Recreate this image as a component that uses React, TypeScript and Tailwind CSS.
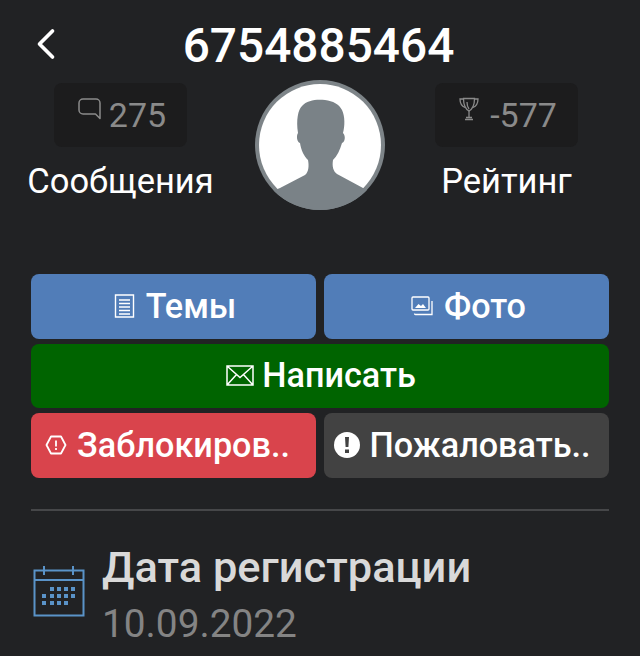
import { ChevronLeft } from "lucide-react"

const font = "font-['Roboto',sans-serif]"

function ChatIcon() {
  return (
    <svg width="23" height="22" viewBox="0 0 23 22" fill="none" stroke="#8a8a8a" strokeWidth="1.5">
      <path d="M5 1h13a4 4 0 0 1 4 4v15.500l-4.500-4.500H5a4 4 0 0 1-4-4V5a4 4 0 0 1 4-4z" strokeLinejoin="round" />
    </svg>
  )
}

function TrophyIcon() {
  return (
    <svg width="20" height="24" viewBox="0 0 20 24" fill="none" stroke="#8a8a8a" strokeWidth="1.300">
      <path d="M4.500 1.500h11c0 6-1 10-5.500 12.500C5.500 11.500 4.500 7.500 4.500 1.500z" />
      <path d="M4.500 2H1c0 4 1.500 7 5 8.500M15.500 2H19c0 4-1.500 7-5 8.500" />
      <path d="M8 5c0 3 .5 5 2 7M10 14v6M6 22.500h8M7 20.500h6" />
    </svg>
  )
}

function Avatar() {
  return (
    <div className="w-[130px] h-[130px] rounded-full bg-[#7d8488] overflow-hidden shrink-0">
      <svg width="130" height="130" viewBox="0 0 130 130" fill="#7a8287">
        <circle cx="65" cy="65" r="61" fill="white" />
        <path d="M25 108L50 95C54 92 54 85 53 80C49 76 46 70 45 63C42 62 41 56 43 53C41 40 43 30 47 26C52 20 62 19 70 20C78 21 84 24 87 30C90 36 90 46 88 53C91 56 90 62 87 63C85 70 82 76 78 80C77 86 78 91 82 94L108 108L130 118V130H0V118z" />
      </svg>
    </div>
  )
}

function Stat({ icon, value, label, boxClass, gapClass }: { icon: React.ReactNode; value: string; label: string; boxClass: string; gapClass: string }) {
  return (
    <div className="flex flex-col items-center">
      <div className={`h-[64px] rounded-lg bg-[#1c1c1d] flex items-center justify-center pl-[3px] ${gapClass} ${boxClass}`}>
        <span className="-mt-3">{icon}</span>
        <span className="text-[34px] leading-none text-[#8a8a8a]">{value}</span>
      </div>
      <div className="text-[34.500px] leading-none text-white mt-[17px] whitespace-nowrap">{label}</div>
    </div>
  )
}

function ActionButton({ color, icon, label, className = "" }: { color: string; icon: React.ReactNode; label: string; className?: string }) {
  return (
    <div className={`h-[64.500px] rounded-lg flex items-center justify-center text-white text-[34.200px] font-medium ${color} ${className}`}>
      {icon}
      <span>{label}</span>
    </div>
  )
}

export default function App() {
  return (
    <div className={`w-[640px] h-[656px] bg-[#212224] overflow-hidden ${font}`}>
      <div className="relative h-[80px] flex items-center justify-center">
        <ChevronLeft className="absolute left-[20px] top-[18px] text-white" size={52} strokeWidth={1.700} />
        <h1 className="text-[47.800px] leading-none font-medium text-white mt-[13px] -ml-[3px]">6754885464</h1>
      </div>

      <div className="flex pl-[28px]">
        <div className="flex w-[185px] justify-center pt-[3px]">
          <Stat icon={<ChatIcon />} value="275" label="Сообщения" boxClass="w-[133px]" gapClass="gap-[8px]" />
        </div>
        <div className="ml-[42px]">
          <Avatar />
        </div>
        <div className="flex w-[143px] ml-[50px] justify-center pt-[3px]">
          <Stat icon={<TrophyIcon />} value="-577" label="Рейтинг" boxClass="w-[143px]" gapClass="gap-[11px]" />
        </div>
      </div>

      <div className="mt-[64px] mx-[31px] grid grid-cols-2 gap-x-2 gap-y-[5px]">
        <ActionButton
          className="gap-[11px] pl-[3px]"
          color="bg-[#517db8]"
          label="Темы"
          icon={
            <svg width="21" height="24" viewBox="0 0 21 24" fill="none" stroke="white" strokeWidth="1.400">
              <path d="M1.500 1h18v22h-18zM5 6h11M5 9.500h11M5 13h11M5 16.500h11M5 20h11" />
            </svg>
          }
        />
        <ActionButton
          className="gap-[11px] pl-[4px]"
          color="bg-[#517db8]"
          label="Фото"
          icon={
            <svg width="22" height="20" viewBox="0 0 22 20" fill="none" stroke="white" strokeWidth="1.300">
              <rect x="1" y="1" width="17" height="13" rx="1" />
              <path d="M3.500 17.500a1 1 0 0 0 1 1H21V5" />
              <path d="M4 12l3.500-4 2.500 2 2-2 3 4z" fill="white" stroke="none" />
            </svg>
          }
        />
        <ActionButton
          className="col-span-2 gap-[8px] pl-[2px]"
          color="bg-[#006400]"
          label="Написать"
          icon={
            <svg width="28" height="21" viewBox="0 0 28 21" fill="none" stroke="white" strokeWidth="1.500">
              <path d="M1 1h26v19H1zM1 1l13 11.500L27 1M1 20l10-11M27 20L17 9" />
            </svg>
          }
        />
        <ActionButton
          className="gap-[10px] pr-[12px]"
          color="bg-[#d9444c]"
          label="Заблокиров.."
          icon={
            <svg width="22" height="20" viewBox="0 0 22 20" fill="none" stroke="white" strokeWidth="1.800">
              <path d="M6 1.500h10l4.500 8.500-4.500 8.500H6L1.500 10z" strokeLinejoin="round" />
              <path d="M11 5.500v6M11 13v2" />
            </svg>
          }
        />
        <ActionButton
          className="gap-[9px] pr-[8px]"
          color="bg-[#424242]"
          label="Пожаловать.."
          icon={
            <svg width="26" height="26" viewBox="0 0 26 26">
              <circle cx="13" cy="13" r="13" fill="white" />
              <path d="M11 5h4l-.6 10h-2.800zM11 17.500h4V21h-4z" fill="#424242" />
            </svg>
          }
        />
      </div>

      <div className="mt-[31px] mx-[31px] h-[2px] bg-[#464749]" />

      <div className="mt-[35px] ml-[33px] flex items-start gap-[17px]">
        <svg width="52" height="52" viewBox="0 0 52 52" fill="none" stroke="#5a93c8" strokeWidth="2" className="mt-[19px]">
          <path d="M1.500 5.500h49v45h-49zM1.500 15h49M11 1v9M40 1v9" />
          <g fill="#5a93c8" stroke="none">
            <rect x="17" y="22" width="4" height="4" />
            <rect x="24" y="22" width="4" height="4" />
            <rect x="31" y="22" width="4" height="4" />
            <rect x="38" y="22" width="4" height="4" />
            <rect x="9" y="29" width="4" height="4" />
            <rect x="17" y="29" width="4" height="4" />
            <rect x="24" y="29" width="4" height="4" />
            <rect x="31" y="29" width="4" height="4" />
            <rect x="38" y="29" width="4" height="4" />
            <rect x="9" y="36" width="4" height="4" />
            <rect x="17" y="36" width="4" height="4" />
            <rect x="24" y="36" width="4" height="4" />
            <rect x="31" y="36" width="4" height="4" />
          </g>
        </svg>
        <div>
          <div className="text-[43.400px] leading-none font-medium text-[#d9d9d9] whitespace-nowrap">Дата регистрации</div>
          <div className="text-[38.800px] leading-none text-[#848484] mt-[16px]">10.09.2022</div>
        </div>
      </div>
    </div>
  )
}
